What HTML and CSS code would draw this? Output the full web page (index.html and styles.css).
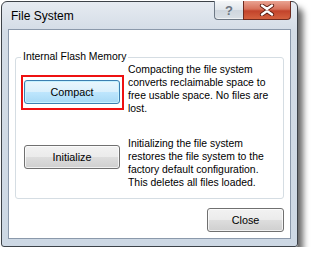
FILE: index.html
```html
<!DOCTYPE html>
<html lang="en">
<head>
    <meta charset="UTF-8">
    <meta name="viewport" content="width=device-width, initial-scale=1.0">
    <title>File System</title>
    <link rel="stylesheet" href="styles.css">
</head>
<body>
    <div class="window">
        <div class="titlebar">
            <span class="title">File System</span>
            <div class="caption-buttons">
                <span class="cap-btn cap-help">?</span>
                <span class="cap-btn cap-close">
                    <svg width="16" height="12" viewBox="0 0 16 12">
                        <path d="M3 1.5 L8 5 L13 1.5 M3 10.5 L8 7 L13 10.5" fill="none" stroke="#5a1a10" stroke-width="4.2" stroke-linecap="round"/>
                        <path d="M3 1.5 L8 5 L13 1.5 M3 10.5 L8 7 L13 10.5" fill="none" stroke="#ffffff" stroke-width="2.4" stroke-linecap="round"/>
                    </svg>
                </span>
            </div>
        </div>
        <div class="client">
            <fieldset class="group">
                <legend>Internal Flash Memory</legend>
                <div class="row row-compact">
                    <div class="action">
                        <div class="highlight">
                            <button class="btn btn-default">Compact</button>
                        </div>
                    </div>
                    <p class="desc">Compacting the file system converts reclaimable space to free usable space. No files are lost.</p>
                </div>
                <div class="row row-init">
                    <div class="action">
                        <button class="btn">Initialize</button>
                    </div>
                    <p class="desc">Initializing the file system restores the file system to the factory default configuration. This deletes all files loaded.</p>
                </div>
            </fieldset>
            <div class="footer">
                <button class="btn btn-close">Close</button>
            </div>
        </div>
    </div>
</body>
</html>
```

FILE: styles.css
```css
body {
    margin: 0;
    background-color: #fff;
    font-family: 'Liberation Sans', Arial, sans-serif;
}
.window {
    box-sizing: border-box;
    width: 297px;
    height: 246px;
    margin: 1px 0 0 1px;
    border: 1px solid #3d4248;
    border-radius: 6px 6px 3px 3px;
    padding: 0 6px 7px 6px;
    background: linear-gradient(#e6ebf1, #d3dce6 30px, #cdd8e4);
    box-shadow: 5px 7px 6px rgba(0, 0, 0, 0.6);
    display: flex;
    flex-direction: column;
}
.titlebar {
    height: 27px;
    display: flex;
    align-items: center;
}
.title {
    padding-left: 3px;
    font-size: 12px;
    color: #000;
}
.caption-buttons {
    margin-left: auto;
    align-self: flex-start;
    margin-top: -1px;
    display: flex;
}
.cap-btn {
    box-sizing: border-box;
    height: 19px;
    display: flex;
    align-items: center;
    justify-content: center;
    border: 1px solid #6d7885;
    border-top: none;
}
.cap-help {
    width: 29px;
    border-right: none;
    border-radius: 0 0 0 4px;
    background: linear-gradient(#f4f6f8, #e0e5ea 50%, #cfd6de 51%, #d9dfe5);
    color: #6c7580;
    font-size: 13px;
    font-weight: bold;
    box-shadow: inset 0 -1px 0 rgba(255, 255, 255, 0.6);
}
.cap-close {
    width: 48px;
    border-color: #6e2a1f;
    border-radius: 0 0 4px 0;
    background: linear-gradient(#e9a392, #d7715a 45%, #c2432b 55%, #d4613f);
}
.client {
    box-sizing: border-box;
    height: 210px;
    border: 1px solid #8b99ab;
    background-color: #fff;
    padding-top: 21px;
}
.group {
    margin: 0 6px;
    padding: 0 5px 9px 5px;
    border: 1px solid #d5dde3;
    border-radius: 3px;
    min-inline-size: 0;
}
.group legend {
    padding: 0 2px;
    font-size: 10.4px;
    line-height: 12px;
    color: #000;
}
.row {
    display: flex;
    align-items: flex-start;
}
.row-init {
    margin-top: 22px;
}
.action {
    width: 107px;
    flex: 0 0 auto;
}
.highlight {
    display: inline-block;
    margin-top: 12px;
    padding: 3px 2px 4px 1px;
    border: 2px solid #ee1111;
}
.row-init .btn {
    margin: 8px 0 0 3px;
}
.desc {
    margin: 0;
    flex: 1;
    font-size: 10.4px;
    line-height: 13px;
    color: #000;
}
.btn {
    display: block;
    box-sizing: border-box;
    width: 96px;
    height: 24px;
    padding: 0;
    border: 1px solid #707070;
    border-radius: 3px;
    background: linear-gradient(#f2f2f2, #ebebeb 50%, #dddddd 51%, #cfcfcf);
    box-shadow: inset 0 0 0 1px rgba(255, 255, 255, 0.7);
    font-family: 'Liberation Sans', Arial, sans-serif;
    font-size: 10.8px;
    color: #000;
}
.btn-default {
    border-color: #3c7fb1;
    background: linear-gradient(#eaf6fd, #d9f0fc 50%, #bee6fd 51%, #a7d9f5);
    box-shadow: inset 0 0 0 1px #c6f2ff;
}
.footer {
    display: flex;
    justify-content: flex-end;
    margin-top: 9px;
    padding-right: 6px;
}
.btn-close {
    width: 77px;
}
```
